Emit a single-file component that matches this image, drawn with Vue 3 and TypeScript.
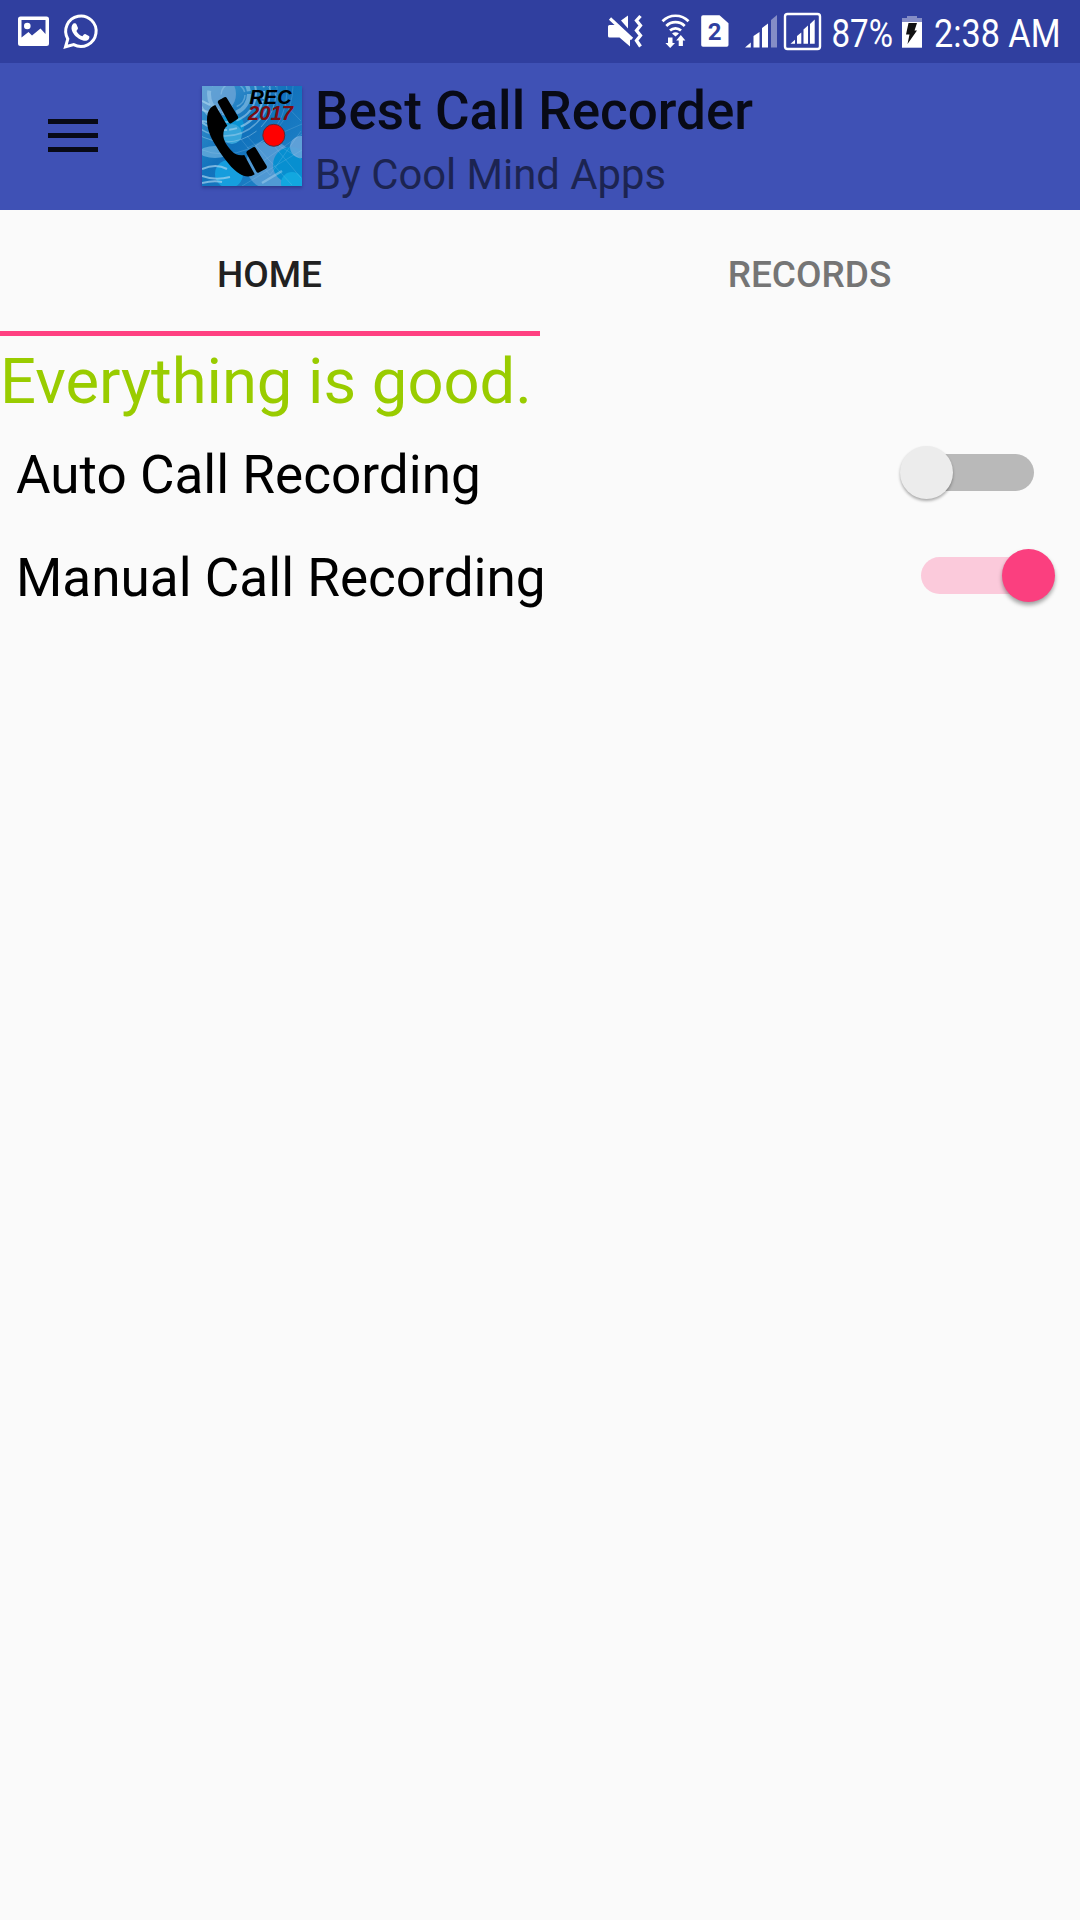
<script setup lang="ts">
import { ref } from 'vue'

interface Setting {
  label: string
  on: boolean
}

const tabs = ['HOME', 'RECORDS']
const activeTab = ref(0)
const settings = ref<Setting[]>([
  { label: 'Auto Call Recording', on: false },
  { label: 'Manual Call Recording', on: true },
])
</script>

<template>
  <div class="screen">
    <header class="status-bar">
      <div class="status-group">
        <!-- gallery -->
        <svg width="56" height="63" viewBox="0 0 56 63">
          <path fill="#fff" fill-rule="evenodd" d="M20.500 16.500h26q2.500 0 2.500 2.500v24.500q0 2.500-2.500 2.500h-26q-2.500 0-2.500-2.500v-24.500q0-2.500 2.500-2.500zM21.500 20v17.500l7-5.500 3.500 3.500 8.500-7 5 5.500v-14z" />
          <circle cx="27.300" cy="26" r="3.300" fill="#fff" />
        </svg>
        <!-- whatsapp -->
        <svg width="56" height="63" viewBox="56 0 56 63">
          <path fill="none" stroke="#fff" stroke-width="3" stroke-linejoin="miter" d="M65.500 46.800l2.300-7.900a15.200 15.200 0 1 1 5.900 5.700z" />
          <path fill="#fff" d="M73.200 23.800c.9-.8 2.700-.6 3.200.5l1.500 3.500c.3.800-.1 1.500-1.500 3.100 1.300 2.500 3.300 4.300 6 5.400 1.500-1.800 2-2.500 2.800-2.200l3.700 1.800c.9.500.5 2.500-.4 3.500-1.300 1.400-3.600 1.700-6.100.8-5.700-2-8.900-5.700-10.400-9.500-1-2.700-.4-5.500 1.200-6.900z" />
        </svg>
      </div>
      <div class="status-group">
        <!-- sound off, vibrate -->
        <svg width="54" height="63" viewBox="600 0 54 63">
          <path fill="#fff" d="M608 26.500q0-1.500 1.500-1.500h6.500l14 13.500v8l-10.500-9h-10q-1.500 0-1.500-1.500zM621 20.500l7-5v13z" />
          <path d="M610 18.500l22 20.500" stroke="#fff" stroke-width="3.200" fill="none" />
          <path d="M640.500 16l-4 4.500 4 5-4 5 4 5-4 5 4 6" stroke="#fff" stroke-width="3.300" fill="none" />
        </svg>
        <!-- wifi -->
        <svg width="42" height="63" viewBox="654 0 42 63">
          <g fill="none" stroke="#fff" stroke-width="2.700">
            <path d="M662.500 21.300a18 18 0 0 1 26 0" />
            <path d="M666.300 26a13 13 0 0 1 18.400 0" />
            <path d="M670 30.500a8 8 0 0 1 11 0" />
          </g>
          <path fill="#fff" d="M672 33.500q3.500-2.500 7 0l-3.500 3zM668 37.500h4.500v5.500h2.500l-4.800 5-4.800-5h2.600zM678.700 46v-5.500h-2.500l4.600-5.500 4.600 5.500h-2.500v5.500z" />
        </svg>
        <!-- sim 2 -->
        <svg width="42" height="63" viewBox="696 0 42 63">
          <path fill="#fff" d="M703 15.300h16.500l9 8v21.700q0 1.800-1.800 1.800h-23.700q-1.800 0-1.800-1.800v-27.900q0-1.800 1.800-1.800z" />
          <text x="714.700" y="40" text-anchor="middle" class="sim">2</text>
        </svg>
        <!-- signal -->
        <svg width="42" height="63" viewBox="738 0 42 63">
          <path fill="#fff" d="M745 47.500l5.800-5v5zM753.500 36l6-4v15.500h-6zM762 28l6-4.500v24h-6z" />
          <path fill="#858dc6" d="M771 20l6-5v32.500h-6z" />
        </svg>
        <!-- boxed signal -->
        <svg width="48" height="63" viewBox="780 0 48 63">
          <rect x="785" y="14" width="35" height="35" rx="2.500" fill="none" stroke="#fff" stroke-width="2.400" />
          <path fill="#fff" d="M790.500 43.700l4.500-4v4zM797 36l4.300-3.500v11.200h-4.300zM803.500 29.500l4.500-4v18.200h-4.500zM810 24l4.700-4.500v24.200h-4.700z" />
        </svg>
        <svg width="70" height="63" viewBox="828 0 70 63">
          <text x="831.500" y="46.800" textLength="61.500" lengthAdjust="spacingAndGlyphs" class="status-text">87%</text>
        </svg>
        <!-- charging battery -->
        <svg width="32" height="63" viewBox="898 0 32 63">
          <path fill="#858dc6" d="M902 22v-4h5v-2h10v2h5v4z" />
          <path fill="#fff" d="M902 22h20v25.700h-20z" />
          <path fill="#111" d="M908.500 23h8.500l-2.500 7.500h2.500l-9.500 13.500 2-9.500h-3.500z" />
        </svg>
        <svg width="150" height="63" viewBox="930 0 150 63">
          <text x="934" y="46.800" textLength="126.500" lengthAdjust="spacingAndGlyphs" class="status-text">2:38 AM</text>
        </svg>
      </div>
    </header>

    <div class="toolbar">
      <button class="menu" aria-label="Menu"><span /><span /><span /></button>
      <svg class="logo" width="100" height="100" viewBox="0 0 100 100">
        <defs>
          <linearGradient id="sky" x1="0" y1="0" x2="1" y2="1">
            <stop offset="0" stop-color="#3f97d0" />
            <stop offset=".45" stop-color="#1172bc" />
            <stop offset="1" stop-color="#2386cb" />
          </linearGradient>
          <clipPath id="tile"><path d="M0 0h100v100h-100z" /></clipPath>
        </defs>
        <g clip-path="url(#tile)">
          <path fill="url(#sky)" d="M0 0h100v100h-100z" />
          <circle cx="14" cy="8" r="20" fill="#6ba4d6" opacity=".8" />
          <circle cx="68" cy="79" r="24" fill="#6ca8db" opacity=".65" />
          <circle cx="89" cy="79" r="18" fill="#078fd0" />
          <circle cx="99" cy="61" r="11" fill="#6fa9dc" opacity=".8" />
          <circle cx="30" cy="40" r="12" fill="#079bd8" opacity=".8" />
          <circle cx="30" cy="48" r="10" fill="#37a5da" />
          <circle cx="27" cy="88" r="14" fill="#16a8e5" opacity=".8" />
          <circle cx="90" cy="97" r="11" fill="#12a7df" />
          <ellipse cx="13" cy="66" rx="15" ry="6" fill="#71b4df" opacity=".7" />
          <g fill="none" stroke="#a5d2ee">
            <circle cx="31" cy="9" r="12" stroke-width="1.500" stroke-dasharray="15 4" opacity=".4" />
            <circle cx="27" cy="8" r="20" stroke-width="4" stroke-dasharray="24 5 9 4" opacity=".5" />
            <circle cx="25" cy="7" r="29" stroke-width="2" stroke-dasharray="36 5" opacity=".55" />
            <circle cx="23" cy="5" r="39" stroke-width="2" stroke-dasharray="8 2 35 4" opacity=".65" />
            <circle cx="23" cy="5" r="45" stroke-width="1.500" opacity=".5" />
            <circle cx="23" cy="5" r="51" stroke-width="1" stroke-dasharray="40 6" opacity=".45" />
            <circle cx="22" cy="5" r="63" stroke-width=".6" opacity=".4" />
            <path d="M0 15l8 4M0 24l9 3M0 35l6 1M0 83q14-6 25 0M0 90q13 5 28 1M0 97q12-3 20-1" stroke-width="2" opacity=".7" />
            <path d="M38 52L68 89 99 45M45 62l55-24M54 80l46-32M62 48l37 44M74 58L99 73M45 50L90 99M40 100L100 64M65 0l34 35M75 0v22M91 0q-1 40-38 60" stroke-width=".5" opacity=".4" />
            <path d="M60 97l20-12" stroke-width="2.500" opacity=".5" />
          </g>
          <path d="M13.300 19C8.500 20.500 5 25 5 34c0 8 3 17 9.700 27 3.500 6 7.500 11.500 11.600 16.300C30 82 34 86 38 88c4 2.500 9.500 4 14.700.3L42.300 69c-4.500 1-9 0-12.600-4-5-5-8.400-11-8.400-16 0-4 1-7.500 4-9.300z" />
          <path d="M16.800 14.200l5.500-3q1.700-.7 2.500.8l11.200 18.500q.8 1.700-.8 2.700l-6 4q-1.500.7-2.500-.8l-10.700-19.500q-.7-1.700.8-2.700zM45.500 64.800l5.700-3.500q1.600-.8 2.500.8l11 18q.7 1.700-.8 2.600l-7 3.800q-1.700.7-2.500-.8l-9.800-18.200q-.7-1.700.9-2.700z" />
          <circle cx="71.800" cy="49.300" r="11" fill="#f00" stroke="#582b3b" stroke-width="1" />
          <text x="47.500" y="18" textLength="42" lengthAdjust="spacingAndGlyphs" class="logo-text">REC</text>
          <text x="46" y="34.400" textLength="45" lengthAdjust="spacingAndGlyphs" class="logo-text year">2017</text>
        </g>
      </svg>
      <div class="titles">
        <h1>Best Call Recorder</h1>
        <p>By Cool Mind Apps</p>
      </div>
    </div>

    <nav class="tabs">
      <button
        v-for="(tab, i) in tabs"
        :key="tab"
        class="tab"
        :class="{ active: i === activeTab }"
        @click="activeTab = i"
      >{{ tab }}</button>
    </nav>

    <main>
      <p class="message">Everything is good.</p>
      <div v-for="s in settings" :key="s.label" class="row">
        <span class="label">{{ s.label }}</span>
        <span class="switch" :class="{ on: s.on }" role="switch" :aria-checked="s.on" @click="s.on = !s.on">
          <span class="thumb" />
        </span>
      </div>
    </main>
  </div>
</template>

<style>
body {
  background: #fafafa;
}
</style>

<style scoped>
.screen {
  width: 1080px;
  height: 1920px;
  overflow: hidden;
  background: #fafafa;
  font-family: Roboto, sans-serif;
}
h1, p { margin: 0; }
button {
  border: 0;
  padding: 0;
  background: none;
  font-family: inherit;
}
svg { display: block; flex: none; overflow: visible; }
.status-bar {
  height: 63px;
  display: flex;
  justify-content: space-between;
  background: #303f9f;
}
.status-group { display: flex; }
.status-text { font-size: 38.5px; fill: #fff; }
.sim { font-size: 24px; font-weight: 700; fill: #303f9f; }
.toolbar {
  height: 147px;
  display: flex;
  align-items: flex-start;
  background: #3f51b5;
}
.menu {
  width: 50px;
  margin: 56px 0 0 48px;
  display: flex;
  flex-direction: column;
  gap: 9px;
}
.menu span { height: 5px; background: #080a16; }
.logo {
  margin: 23px 0 0 104px;
  box-shadow: 0 2px 3px rgba(20, 20, 80, .4);
}
.logo-text {
  font: italic 700 19.500px "Liberation Sans", sans-serif;
  fill: #000;
}
.logo-text.year { fill: #7d0b12; }
.titles {
  margin-left: 13px;
  white-space: nowrap;
}
.titles h1 {
  margin-top: 17px;
  font-size: 53px;
  font-weight: 500;
  line-height: 63px;
  color: #080a16;
}
.titles p {
  margin-top: 7px;
  font-size: 41.800px;
  line-height: 49px;
  color: #1c2451;
}
.tabs { display: flex; height: 126px; }
.tab {
  flex: 1;
  box-sizing: border-box;
  height: 126px;
  padding: 7px 1px 0 0;
  border-bottom: 5px solid transparent;
  font-size: 37px;
  font-weight: 500;
  color: #757575;
}
.tab.active {
  color: #212121;
  border-bottom-color: #ff4081;
}
.message {
  height: 87px;
  font-size: 63.300px;
  line-height: 90px;
  color: #9c0;
  white-space: nowrap;
}
.row {
  height: 103px;
  display: flex;
  align-items: center;
  justify-content: space-between;
  padding: 0 46px 0 16px;
}
.label {
  font-size: 53.100px;
  color: #000;
  white-space: nowrap;
}
.switch {
  position: relative;
  width: 113px;
  height: 37px;
  border-radius: 19px;
  background: #b9b9b9;
  margin-bottom: 4px;
}
.thumb {
  position: absolute;
  left: -21px;
  top: -8px;
  width: 53px;
  height: 53px;
  border-radius: 50%;
  background: #ececec;
  box-shadow: 0 2px 3px rgba(0, 0, 0, .32);
}
.switch.on { background: #fbcadb; }
.switch.on .thumb {
  left: 81px;
  background: #fb3f7f;
  box-shadow: 0 3px 4px rgba(0, 0, 0, .36);
}
</style>
